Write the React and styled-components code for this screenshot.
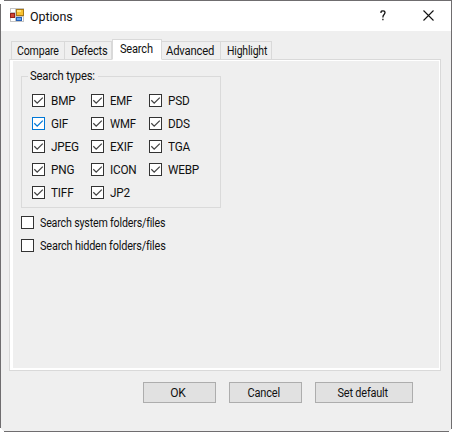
import React from 'react';
import styled, { createGlobalStyle } from 'styled-components';

const GlobalStyle = createGlobalStyle`
  * { box-sizing: border-box; }
  body { margin: 0; background: #fff; overflow: hidden; }
`;

const Dialog = styled.div`
  width: 452px;
  height: 432px;
  border: 1px solid #6f6d6f;
  background: #efefef;
  color: #111;
  font-family: Roboto, sans-serif;
  font-size: 12px;
  line-height: 14px;
  position: relative;
  display: flex;
  flex-direction: column;
`;

const Corner = styled.i`
  position: absolute;
  width: 4px;
  height: 4px;
  background: linear-gradient(${p => p.$angle}, #fff 50%, transparent 50%);
  ${p => p.$v}: -1px;
  ${p => p.$h}: -1px;
`;

const TitleBar = styled.header`
  height: 30px;
  flex: none;
  background: #fff;
  display: flex;
  align-items: center;
  padding: 0 17px 0 9px;
`;

const Title = styled.h1`
  margin: 1px 0 0 5px;
  flex: 1;
  font-size: 12.5px;
  font-weight: 400;
  letter-spacing: -0.1px;
`;

const CaptionButton = styled.button`
  border: 0;
  padding: 0;
  margin: 0 0 1px ${p => p.$gap || 0}px;
  background: none;
  display: flex;
`;

const Text = styled.span`
  display: inline-block;
  letter-spacing: -0.2px;
  white-space: nowrap;
  transform: scaleX(${p => p.$squeeze ?? 1});
  transform-origin: ${p => (p.$centered ? 'center' : 'left')};
`;

const Tabs = styled.nav`
  height: 21px;
  margin: 8px 0 -1px 10px;
  display: flex;
  align-items: flex-end;
  position: relative;
`;

const Tab = styled.button`
  width: ${p => p.$w}px;
  height: ${p => (p.$active ? 21 : 19)}px;
  border: 1px solid #d9d9d9;
  border-left-width: ${p => (p.$first || p.$active ? 1 : 0)}px;
  border-bottom-color: ${p => (p.$active ? '#fff' : '#d9d9d9')};
  background: ${p => (p.$active ? '#fff' : '#efefef')};
  padding: 0 0 ${p => (p.$active ? 2 : 0)}px ${p => p.$pad}px;
  font: inherit;
  color: inherit;
  text-align: left;
`;

const Panel = styled.main`
  width: 432px;
  height: 312px;
  margin-left: 8px;
  border: 1px solid #d9d9d9;
  background: #efefef;
  box-shadow: inset 3px 1px #fff, inset -1px -2px #fff;
  padding: 9px 11px;
`;

const Group = styled.fieldset`
  width: 200px;
  height: 139px;
  margin: 0;
  padding: 11px 0 0 10px;
  min-width: 0;
  border: 1px solid #dadada;
`;

const Legend = styled.legend`
  width: 70px;
  margin-left: -4px;
  padding: 0 2px;
  height: 14px;
`;

const TypeGrid = styled.div`
  display: grid;
  grid-template-columns: 59px 58px 60px;
  grid-auto-rows: 23px;
`;

const Check = styled.label`
  height: 13px;
  display: flex;
  align-items: center;
  gap: 6px;
`;

const Box = styled.span`
  width: 13px;
  height: 13px;
  flex: none;
  border: 1px solid ${p => (p.$hot ? '#0078d7' : '#333')};
  color: ${p => (p.$hot ? '#0078d7' : '#444')};
  background: #fff;
  display: flex;
`;

const FolderOptions = styled.div`
  margin-top: 8px;
  display: grid;
  grid-auto-rows: 23px;
`;

const Actions = styled.footer`
  display: flex;
  gap: 13px;
  margin: 11px 0 0 142px;
`;

const Button = styled.button`
  width: ${p => p.$w}px;
  height: 21px;
  padding: 0 3px 0 0;
  border: 1px solid #adadad;
  background: #e1e1e1;
  color: inherit;
  font: inherit;
`;

const IconArt = styled.svg`
  width: 15px;
  height: 15px;
  margin-bottom: 1px;
`;

function AppIcon() {
  return (
    <IconArt viewBox="0 0 15 15" shapeRendering="crispEdges">
      <path d="M0 0H14V14H0Z" fill="#c4c4c4" />
      <path d="M1 1H5V4H1ZM1 10H5V13H1ZM12 9H13V13H12Z" fill="#fff" />
      <path d="M6 1H14V8H6Z" fill="#a97913" />
      <path d="M7 2H13V7H7Z" fill="#f7c132" />
      <path d="M7 2H11V4H7Z" fill="#ffe27a" />
      <path d="M0 5H5V10H0Z" fill="#94201a" />
      <path d="M1 6H4V9H1Z" fill="#d24532" />
      <path d="M6 9H12V13H6Z" fill="#265fb5" />
      <path d="M7 10H11V12H7Z" fill="#65a6ee" />
    </IconArt>
  );
}

function CheckItem({ label, checked, hot, squeeze }) {
  return (
    <Check>
      <Box $hot={hot}>
        {checked && (
          <svg width="11" height="11" viewBox="0 0 11 11">
            <path d="M1.3 5.3L4.2 8.2L9.8 2.6" fill="none" stroke="currentColor" strokeWidth="1.3" />
          </svg>
        )}
      </Box>
      <Text $squeeze={squeeze}>{label}</Text>
    </Check>
  );
}

const types = ['BMP', 'EMF', 'PSD', 'GIF', 'WMF', 'DDS', 'JPEG', 'EXIF', 'TGA', 'PNG', 'ICON', 'WEBP', 'TIFF', 'JP2'];

export default function App() {
  return (
    <>
      <GlobalStyle />
      <Dialog>
        <TitleBar>
          <AppIcon />
          <Title>Options</Title>
          <CaptionButton aria-label="Help">
            <svg width="7" height="11" viewBox="0 0 7 11">
              <path d="M1 3V2.2Q1 .8 3 .8Q5 .8 5 2.6Q5 3.7 3.9 4.7Q2.9 5.6 2.9 7.5M2.9 8.8V10.3" fill="none" stroke="#111" strokeWidth="1.3" />
            </svg>
          </CaptionButton>
          <CaptionButton aria-label="Close" $gap={36}>
            <svg width="11" height="11" viewBox="0 0 11 11">
              <path d="M.5.5L10.5 10.5M10.5.5L.5 10.5" stroke="#111" strokeWidth="1.1" />
            </svg>
          </CaptionButton>
        </TitleBar>
        <Tabs>
          <Tab $w={54} $pad={5} $first><Text $squeeze={0.88}>Compare</Text></Tab>
          <Tab $w={47} $pad={6}><Text $squeeze={0.92}>Defects</Text></Tab>
          <Tab $w={50} $pad={7} $active><Text $squeeze={0.92}>Search</Text></Tab>
          <Tab $w={59} $pad={4}><Text $squeeze={0.94}>Advanced</Text></Tab>
          <Tab $w={51} $pad={6}><Text $squeeze={0.87}>Highlight</Text></Tab>
        </Tabs>
        <Panel>
          <Group>
            <Legend><Text $squeeze={0.94}>Search types:</Text></Legend>
            <TypeGrid>
              {types.map(t => (
                <CheckItem key={t} label={t} checked hot={t === 'GIF'} squeeze={t === 'WMF' || t === 'EMF' ? 0.95 : 0.98} />
              ))}
            </TypeGrid>
          </Group>
          <FolderOptions>
            <CheckItem label="Search system folders/files" squeeze={0.888} />
            <CheckItem label="Search hidden folders/files" squeeze={0.908} />
          </FolderOptions>
        </Panel>
        <Actions>
          <Button $w={73}><Text $centered>OK</Text></Button>
          <Button $w={73}><Text $centered $squeeze={0.92}>Cancel</Text></Button>
          <Button $w={98}><Text $centered $squeeze={0.91}>Set default</Text></Button>
        </Actions>
        <Corner $v="top" $h="left" $angle="135deg" />
        <Corner $v="bottom" $h="left" $angle="45deg" />
        <Corner $v="bottom" $h="right" $angle="-45deg" />
      </Dialog>
    </>
  );
}
